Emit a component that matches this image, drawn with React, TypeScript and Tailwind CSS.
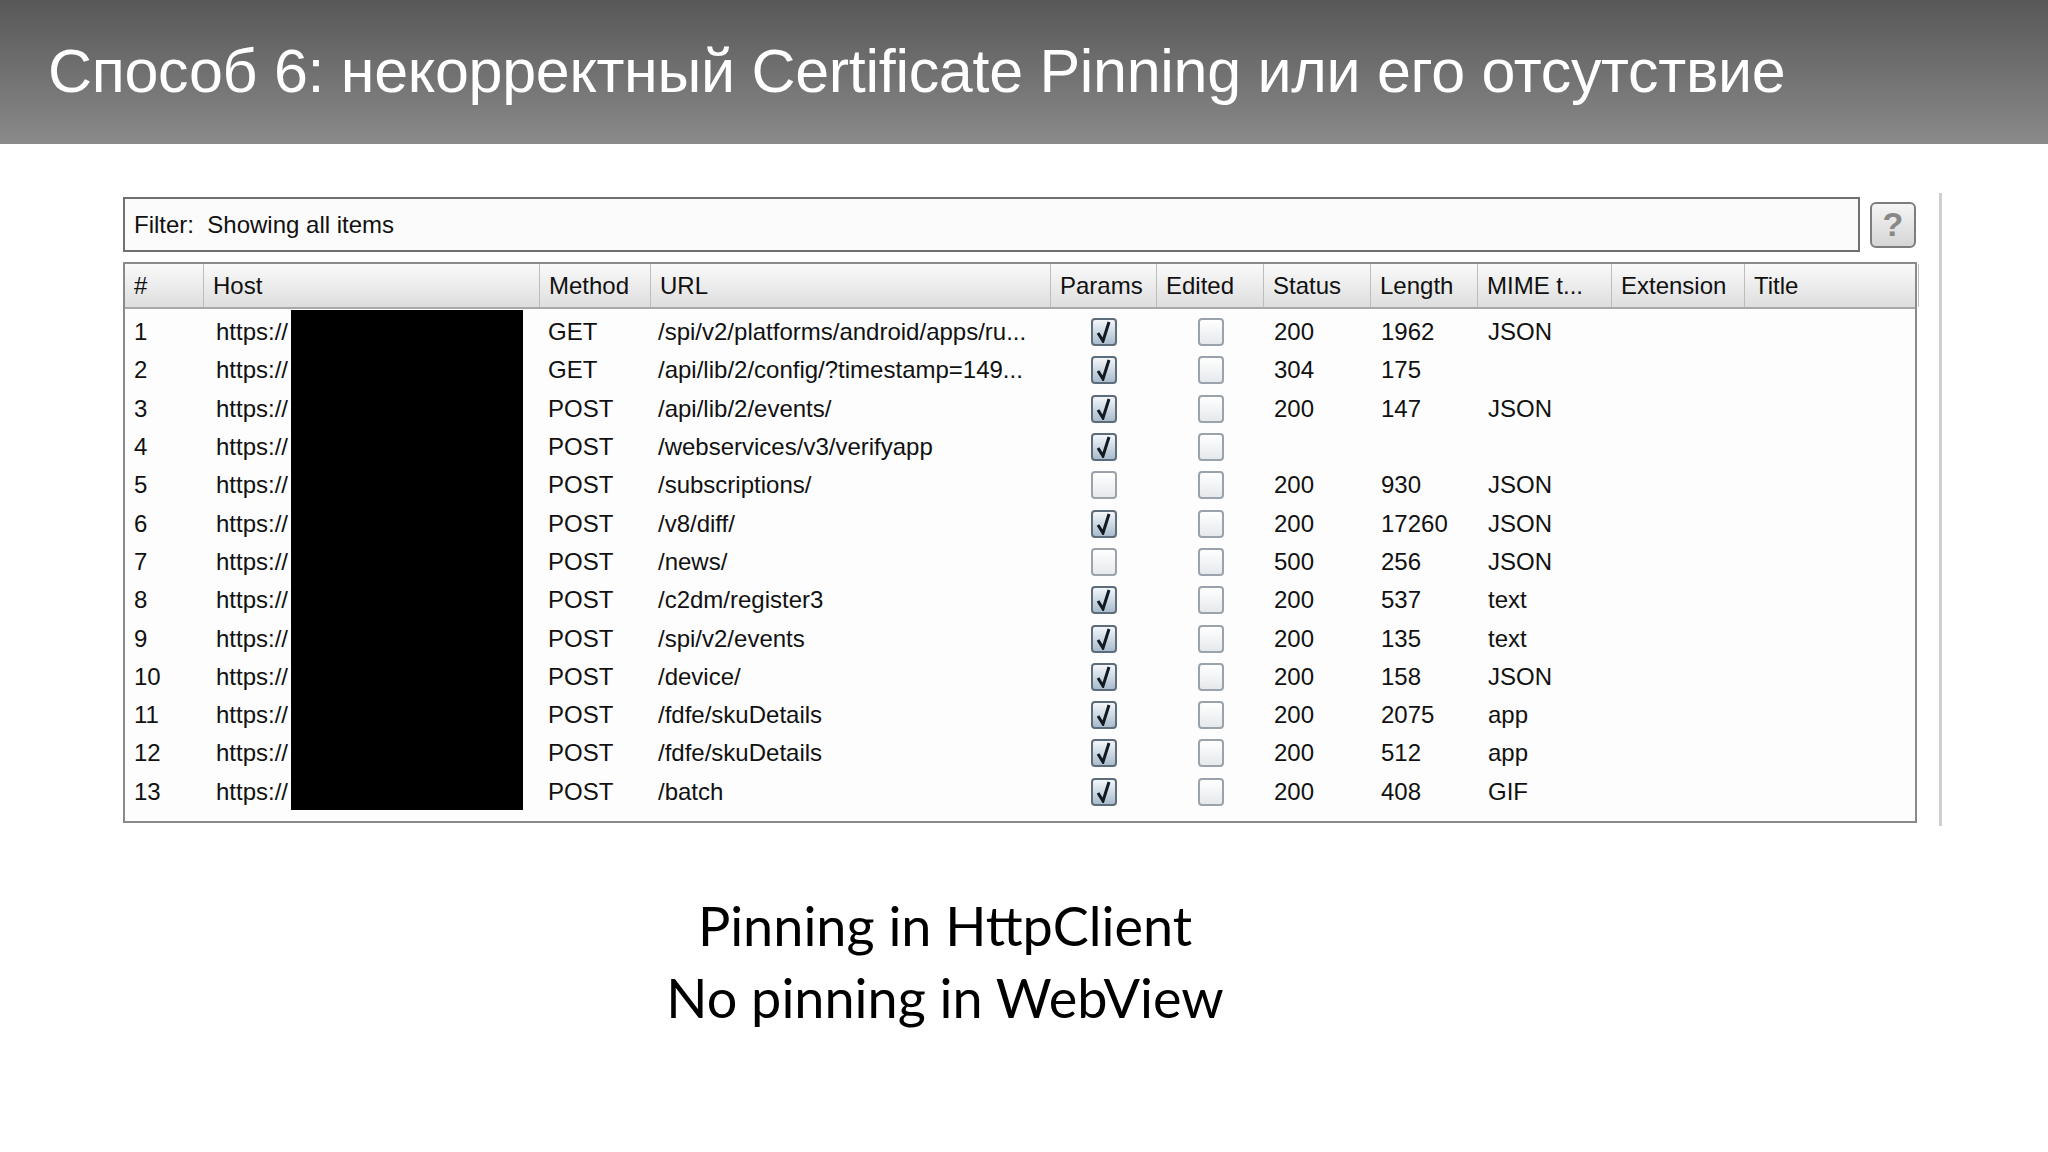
const rows: [string, string, string, boolean, string, string, string, boolean][] = [
  ["1", "GET", "/spi/v2/platforms/android/apps/ru...", true, "200", "1962", "JSON", false],
  ["2", "GET", "/api/lib/2/config/?timestamp=149...", true, "304", "175", "", true],
  ["3", "POST", "/api/lib/2/events/", true, "200", "147", "JSON", true],
  ["4", "POST", "/webservices/v3/verifyapp", true, "", "", "", false],
  ["5", "POST", "/subscriptions/", false, "200", "930", "JSON", false],
  ["6", "POST", "/v8/diff/", true, "200", "17260", "JSON", false],
  ["7", "POST", "/news/", false, "500", "256", "JSON", false],
  ["8", "POST", "/c2dm/register3", true, "200", "537", "text", false],
  ["9", "POST", "/spi/v2/events", true, "200", "135", "text", false],
  ["10", "POST", "/device/", true, "200", "158", "JSON", false],
  ["11", "POST", "/fdfe/skuDetails", true, "200", "2075", "app", false],
  ["12", "POST", "/fdfe/skuDetails", true, "200", "512", "app", false],
  ["13", "POST", "/batch", true, "200", "408", "GIF", false],
];

const widths = [79, 336, 111, 400, 106, 107, 107, 107, 134, 133, 174];
const heads = ["#", "Host", "Method", "URL", "Params", "Edited", "Status", "Length", "MIME t...", "Extension", "Title"];

function Box({ checked }: { checked: boolean }) {
  return (
    <div
      className={`w-[26px] h-[28px] rounded-[4px] border-2 flex items-center justify-center ${
        checked ? "bg-gradient-to-b from-[#f4f7fa] to-[#a9bccd] border-[#5d6c7a]" : "bg-gradient-to-b from-white to-[#e6e9ec] border-[#9aa3ab]"
      }`}
    >
      {checked && (
        <svg width="18" height="22" viewBox="0 0 18 22">
          <path d="M3 12 L8 20 L14 1" fill="none" stroke="#111a22" strokeWidth="3" />
        </svg>
      )}
    </div>
  );
}

export default function App() {
  return (
    <div className="w-[2048px] h-[1152px] bg-white overflow-hidden" style={{ fontFamily: "'Liberation Sans', Arial, sans-serif" }}>
      <div className="h-[144px] bg-gradient-to-b from-[#585858] to-[#8a8a8a] flex items-center pl-[48px]">
        <h1 className="text-white text-[61px] tracking-[-0.3px]">Способ 6: некорректный Certificate Pinning или его отсутствие</h1>
      </div>
      <div className="flex pl-[123px] pt-[53px]">
        <div className="w-[1794px]">
          <div className="flex items-center gap-[10px]">
            <div className="w-[1737px] h-[55px] border-2 border-[#707070] bg-[#fbfbfb] flex items-center pl-[9px] text-[24px] text-[#111]">
              Filter:&nbsp; Showing all items
            </div>
            <div className="w-[46px] h-[46px] border-2 border-[#7d7d7d] rounded-[6px] bg-gradient-to-b from-[#f5f5f5] to-[#d5d5d5] flex items-center justify-center text-[34px] text-[#888] font-bold">
              ?
            </div>
          </div>
          <div className="mt-[10px] w-[1794px] h-[561px] border-2 border-[#8a8a8a] bg-[#fdfdfd] text-[24px] text-[#111]">
            <div className="flex h-[45px] bg-gradient-to-b from-[#fafafa] to-[#dedede] border-b-2 border-[#a8a8a8]">
              {heads.map((h, i) => (
                <div key={h} style={{ width: widths[i] }} className="flex items-center pl-[9px] border-r border-[#bdbdbd] shrink-0">
                  {h}
                </div>
              ))}
            </div>
            <div className="relative pt-[4px]">
              <div className="absolute left-[166px] top-[1px] w-[232px] h-[500px] bg-black" />
              {rows.map((r) => (
                <div key={r[0]} className="flex h-[38.3px] items-center">
                  <div style={{ width: widths[0] }} className="pl-[9px] shrink-0">{r[0]}</div>
                  <div style={{ width: widths[1] }} className="pl-[12px] shrink-0 flex">
                    https://
                    {r[7] && <span className="ml-[228px]">.</span>}
                  </div>
                  <div style={{ width: widths[2] }} className="pl-[8px] shrink-0">{r[1]}</div>
                  <div style={{ width: widths[3] }} className="pl-[7px] shrink-0 whitespace-nowrap">{r[2]}</div>
                  <div style={{ width: widths[4] }} className="shrink-0 flex justify-center"><Box checked={r[3]} /></div>
                  <div style={{ width: widths[5] }} className="shrink-0 flex justify-center"><Box checked={false} /></div>
                  <div style={{ width: widths[6] }} className="pl-[10px] shrink-0">{r[4]}</div>
                  <div style={{ width: widths[7] }} className="pl-[10px] shrink-0">{r[5]}</div>
                  <div style={{ width: widths[8] }} className="pl-[10px] shrink-0">{r[6]}</div>
                </div>
              ))}
            </div>
          </div>
        </div>
        <div className="ml-[22px] mt-[-4px] w-[3px] h-[633px] bg-[#cfcfcf]" />
      </div>
      <div className="mt-[64px] text-center text-[54px] leading-[72px] text-black" style={{ fontFamily: "Lato, 'Open Sans', sans-serif" }}>
        <div className="w-[1890px]">Pinning in HttpClient</div>
        <div className="w-[1890px]">No pinning in WebView</div>
      </div>
    </div>
  );
}
